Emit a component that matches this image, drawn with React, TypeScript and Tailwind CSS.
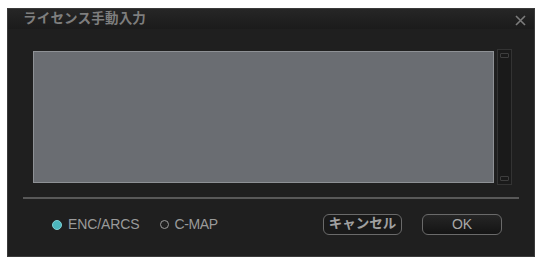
export default function App() {
  return (
    <div className="w-[540px] h-[262px] bg-white pt-[8px] pl-[7px]" style={{ fontFamily: '"Liberation Sans", "Noto Sans CJK JP", sans-serif' }}>
      <div className="w-[528px] h-[249px] bg-[#1f1f1f] border border-[#3a3a3a] flex flex-col">
        {/* Title bar */}
        <div className="h-[20px] flex items-center justify-between pl-[15px] pr-[8px] bg-gradient-to-b from-[#262626] to-[#1b1b1b]">
          <span className="text-[13.5px] font-bold text-[#7e7e7e] tracking-[0.2px]">ライセンス手動入力</span>
          <svg width="11" height="11" viewBox="0 0 11 11" className="mt-[2px]">
            <path d="M1 1 L10 10 M10 1 L1 10" stroke="#7c7c7c" strokeWidth="1.6" />
          </svg>
        </div>

        {/* Input area */}
        <div className="flex pl-[25px] pt-[22px] gap-[3px]">
          <div className="w-[461px] h-[132px] bg-[#6a6d72] border border-[#8e9195]" />
          <div className="w-[15px] h-[136px] -mt-[2px] border border-[#333] bg-[#1a1a1a] flex flex-col justify-between items-center py-[3px]">
            <div className="w-[9px] h-[5px] border border-[#3e3e3e] rounded-[1px]" />
            <div className="w-[9px] h-[5px] border border-[#3e3e3e] rounded-[1px]" />
          </div>
        </div>

        {/* Separator */}
        <div className="mx-[15px] mt-[12px] h-[2px] bg-[#585858]" />

        {/* Bottom row */}
        <div className="flex items-center pl-[44px] pr-[32px] mt-[15px]">
          <div className="flex items-center gap-[6px]">
            <span className="w-[10px] h-[10px] rounded-full bg-[#4cb6bd] border border-[#7fd0d4]" />
            <span className="text-[14px] text-[#9a9a9a] tracking-[-0.1px]">ENC/ARCS</span>
          </div>
          <div className="flex items-center gap-[6px] ml-[20px]">
            <span className="w-[9px] h-[9px] rounded-full border-[1.5px] border-[#9a9a9a]" />
            <span className="text-[14px] text-[#9a9a9a] tracking-[-0.4px]">C-MAP</span>
          </div>
          <div className="ml-auto flex items-center gap-[20px]">
            <button className="w-[79px] h-[21px] rounded-[6px] border border-[#6a6a6a] bg-[#1a1a1a] text-[13.5px] font-bold text-[#a0a0a0] flex items-center justify-center">
              キャンセル
            </button>
            <button className="w-[80px] h-[21px] rounded-[6px] border border-[#6a6a6a] bg-gradient-to-b from-[#262626] to-[#141414] text-[14px] text-[#a8a8a8] flex items-center justify-center">
              OK
            </button>
          </div>
        </div>
      </div>
    </div>
  );
}
